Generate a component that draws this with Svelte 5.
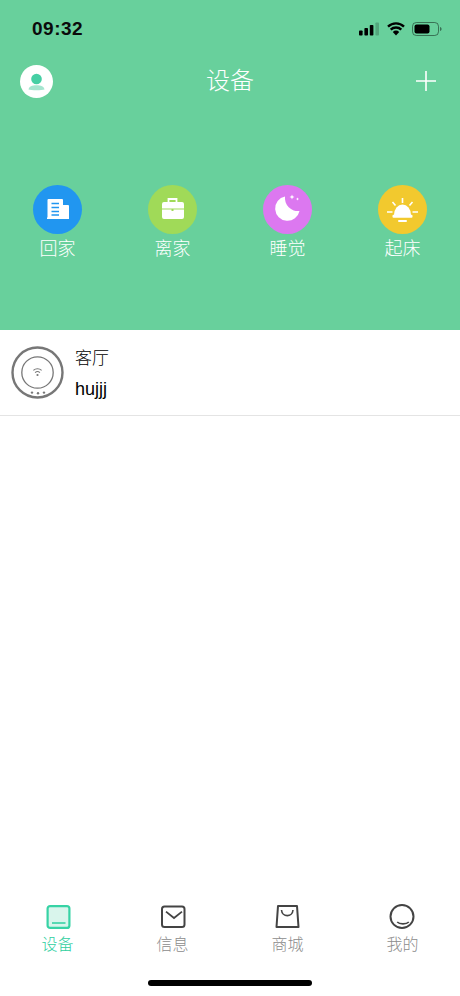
<script>
  const scenes = [
    { name: '回家', color: '#2196f0', icon: 'home' },
    { name: '离家', color: '#a0da58', icon: 'bag' },
    { name: '睡觉', color: '#dc78f0', icon: 'moon' },
    { name: '起床', color: '#f2c92e', icon: 'sun' }
  ];
  const tabs = [
    { name: '设备', icon: 'device', active: true },
    { name: '信息', icon: 'mail' },
    { name: '商城', icon: 'shop' },
    { name: '我的', icon: 'me' }
  ];
</script>

<main class="page">
  <section class="hero">
    <div class="status">
      <span class="time">09:32</span>
      <div class="status-icons">
        <svg width="21" height="14" viewBox="0 0 21 14">
          <rect x="0" y="8.5" width="3.6" height="5" rx="0.8" fill="#000" />
          <rect x="5.4" y="6" width="3.6" height="7.5" rx="0.8" fill="#000" />
          <rect x="10.8" y="3" width="3.6" height="10.5" rx="0.8" fill="#000" />
          <rect x="16.4" y="0.5" width="3.6" height="13" rx="0.8" fill="#000" opacity="0.2" />
        </svg>
        <svg width="18" height="14" viewBox="0 0 18 14">
          <path d="M1 4.6 A11.5 11.5 0 0 1 17 4.6 M3.7 7.6 A7.6 7.6 0 0 1 14.3 7.6" fill="none" stroke="#000" stroke-width="2.4" />
          <path d="M5.8 9.9 A4.6 4.6 0 0 1 12.2 9.9 L9 13.6 Z" fill="#000" />
        </svg>
        <svg width="30" height="14" viewBox="0 0 30 14">
          <rect x="0.5" y="0.5" width="26" height="13" rx="3.8" fill="none" stroke="#000" stroke-opacity="0.45" />
          <rect x="2.5" y="2.5" width="15" height="9" rx="2" fill="#000" />
          <path d="M28 5 C29 5.4 29.6 6.1 29.6 7 C29.6 7.9 29 8.6 28 9 Z" fill="#000" opacity="0.45" />
        </svg>
      </div>
    </div>

    <header class="nav">
      <span class="avatar">
        <svg width="33" height="33" viewBox="0 0 33 33">
          <circle cx="16.5" cy="16.5" r="16.5" fill="#fff" />
          <circle cx="16.5" cy="14" r="5.3" fill="#46cfa4" />
          <path d="M8.5 24.5 C9 21.4 12 20.3 16.5 20.3 C21 20.3 24 21.4 24.5 24.5 C22 25.6 11 25.6 8.5 24.5 Z" fill="#a5e5cf" />
        </svg>
      </span>
      <h1>设备</h1>
      <svg class="plus" width="20" height="20" viewBox="0 0 20 20">
        <path d="M10 0 V20 M0 10 H20" stroke="#fff" stroke-width="1.6" />
      </svg>
    </header>

    <div class="scenes">
      {#each scenes as s}
        <div class="scene">
          <span class="badge" style="background: {s.color}">
            <svg width="49" height="49" viewBox="0 0 49 49">
              {#if s.icon === 'home'}
                <path d="M15.5 14 H29 Q30 14 30 15 V20 H35 Q36 20 36 21 V34 H14 V32.5 H14.5 V15 Q14.5 14 15.5 14 Z" fill="#fff" />
                <path d="M18.5 18.5 H26 M18.5 22.5 H26 M18.5 26.5 H26 M18.5 30 H26" stroke="#2196f0" stroke-width="1.5" />
              {:else if s.icon === 'bag'}
                <path d="M20.5 17 V14 H28.5 V17" fill="none" stroke="#fff" stroke-width="1.8" />
                <path d="M16 17 H34 Q36 17 36 19 V23.6 H14 V19 Q14 17 16 17 Z M14 24.4 H23.5 V26 H25.5 V24.4 H36 V32 Q36 34 34 34 H16 Q14 34 14 32 Z" fill="#fff" />
              {:else if s.icon === 'moon'}
                <path d="M22 11.5 A12.3 12.3 0 1 0 36.5 26 A13 13 0 0 1 22 11.5 Z" fill="#fff" />
                <path d="M29 9.5 L29.7 11.3 L31.5 12 L29.7 12.7 L29 14.5 L28.3 12.7 L26.5 12 L28.3 11.3 Z" fill="#fff" />
                <path d="M34.5 12.5 L35 13.5 L36 14 L35 14.5 L34.5 15.5 L34 14.5 L33 14 L34 13.5 Z" fill="#fff" />
              {:else if s.icon === 'sun'}
                <path d="M16 30 A8.5 10.5 0 0 1 33 30 Z" fill="#fff" />
                <rect x="14.5" y="29.8" width="20" height="3" rx="1" fill="#fff" />
                <rect x="20" y="35" width="9" height="2" rx="1" fill="#fff" />
                <path d="M24.5 13 V18 M14.5 17 L17.5 20.5 M34.5 17 L31.5 20.5 M9 27 H14.5 M34.5 27 H40" stroke="#fff" stroke-width="1.6" />
              {/if}
            </svg>
          </span>
          <span class="scene-name">{s.name}</span>
        </div>
      {/each}
    </div>
  </section>

  <section class="list">
    <div class="room">
      <svg class="hub" width="54" height="54" viewBox="0 0 54 54">
        <circle cx="26.5" cy="26.5" r="25" fill="#fff" stroke="#777" stroke-width="2.4" />
        <circle cx="26.5" cy="26.5" r="15.7" fill="none" stroke="#777" stroke-width="1.3" />
        <path d="M22.4 24.4 A6 6 0 0 1 30.6 24.4 M24.1 26.6 A3.6 3.6 0 0 1 28.9 26.6" fill="none" stroke="#777" stroke-width="1.1" />
        <circle cx="26.5" cy="29" r="1.1" fill="#777" />
        <circle cx="21" cy="46.6" r="1.2" fill="#777" />
        <circle cx="27" cy="47.2" r="1.2" fill="#777" />
        <circle cx="33" cy="46.6" r="1.2" fill="#777" />
      </svg>
      <div class="room-text">
        <span>客厅</span>
        <span>hujjj</span>
      </div>
    </div>
  </section>

  <nav class="tabbar">
    {#each tabs as t}
      <div class="tab" class:active={t.active}>
        <svg width="28" height="28" viewBox="0 0 28 28">
          {#if t.icon === 'device'}
            <rect x="3.6" y="2.1" width="21.8" height="21.8" rx="2.5" fill="#d9f5ec" stroke="#37d3a5" stroke-width="2.2" />
            <path d="M8 19 H21.5" stroke="#37d3a5" stroke-width="1.6" />
          {:else if t.icon === 'mail'}
            <rect x="3" y="2.6" width="22.5" height="20.5" rx="2.5" fill="none" stroke="#444" stroke-width="2" />
            <path d="M7 7.6 L15 14 L23 7.6" fill="none" stroke="#444" stroke-width="1.8" />
          {:else if t.icon === 'shop'}
            <path d="M4 2 H23 L24.5 23 H2.5 Z" fill="none" stroke="#444" stroke-width="2" stroke-linejoin="round" />
            <path d="M7.5 6 C8 13.5 18.5 13.5 19 6" fill="none" stroke="#444" stroke-width="1.6" />
          {:else}
            <circle cx="13" cy="12.5" r="11.5" fill="none" stroke="#444" stroke-width="2" />
            <path d="M8.2 18 C10.5 20.5 17.5 20.5 19.8 18" fill="none" stroke="#444" stroke-width="1.6" />
          {/if}
        </svg>
        <span>{t.name}</span>
      </div>
    {/each}
  </nav>

  <div class="home-bar"></div>
</main>

<style>
  :global(body) {
    margin: 0;
    background: #fff;
  }

  .page {
    width: 460px;
    height: 996px;
    display: flex;
    flex-direction: column;
    font-family: "Noto Sans CJK SC", "Liberation Sans", sans-serif;
    font-weight: 300;
    overflow: hidden;
  }

  .hero {
    height: 330px;
    box-sizing: border-box;
    background: #68d09c;
  }

  .status {
    height: 56px;
    box-sizing: border-box;
    padding: 16px 18px 0 32px;
    display: flex;
    justify-content: space-between;
    align-items: flex-start;
  }

  .time {
    font-family: "Liberation Sans", sans-serif;
    font-size: 19px;
    font-weight: 700;
    line-height: 26px;
    color: #0b0b0b;
    letter-spacing: 0.5px;
  }

  .status-icons {
    display: flex;
    align-items: center;
    gap: 7px;
    margin-top: 6px;
  }

  .nav {
    height: 50px;
    padding: 0 24px;
    display: grid;
    grid-template-columns: 1fr auto 1fr;
    align-items: center;
  }

  .avatar {
    display: flex;
    margin-left: -4px;
  }

  .nav h1 {
    margin: 0 0 6px;
    font-size: 24px;
    font-weight: 300;
    color: #fff;
  }

  .plus {
    justify-self: end;
  }

  .scenes {
    margin-top: 79px;
    display: grid;
    grid-template-columns: repeat(4, 115px);
  }

  .scene {
    display: flex;
    flex-direction: column;
    align-items: center;
  }

  .badge {
    width: 49px;
    height: 49px;
    border-radius: 50%;
    display: flex;
  }

  .scene-name {
    font-size: 18px;
    line-height: 26px;
    color: #fff;
  }

  .list {
    flex: 1;
  }

  .room {
    height: 86px;
    box-sizing: border-box;
    border-bottom: 1px solid #e4e4e4;
    padding: 0 0 0 11px;
    display: flex;
    align-items: center;
    gap: 10px;
  }

  .hub {
    display: block;
  }

  .room-text {
    display: flex;
    flex-direction: column;
    gap: 8px;
    font-size: 17px;
    line-height: 24px;
    color: #000;
  }

  .room-text span:last-child {
    font-family: "Liberation Sans", sans-serif;
    font-size: 18px;
    font-weight: 400;
  }

  .tabbar {
    height: 66px;
    display: grid;
    grid-template-columns: repeat(4, 115px);
  }

  .tab {
    display: flex;
    flex-direction: column;
    align-items: center;
    font-size: 16px;
    line-height: 22px;
    color: #8c8c8c;
  }

  .tab.active {
    color: #30cf9f;
  }

  .home-bar {
    width: 164px;
    height: 6px;
    border-radius: 3px;
    background: #000;
    margin: 10px auto;
    flex-shrink: 0;
  }
</style>
